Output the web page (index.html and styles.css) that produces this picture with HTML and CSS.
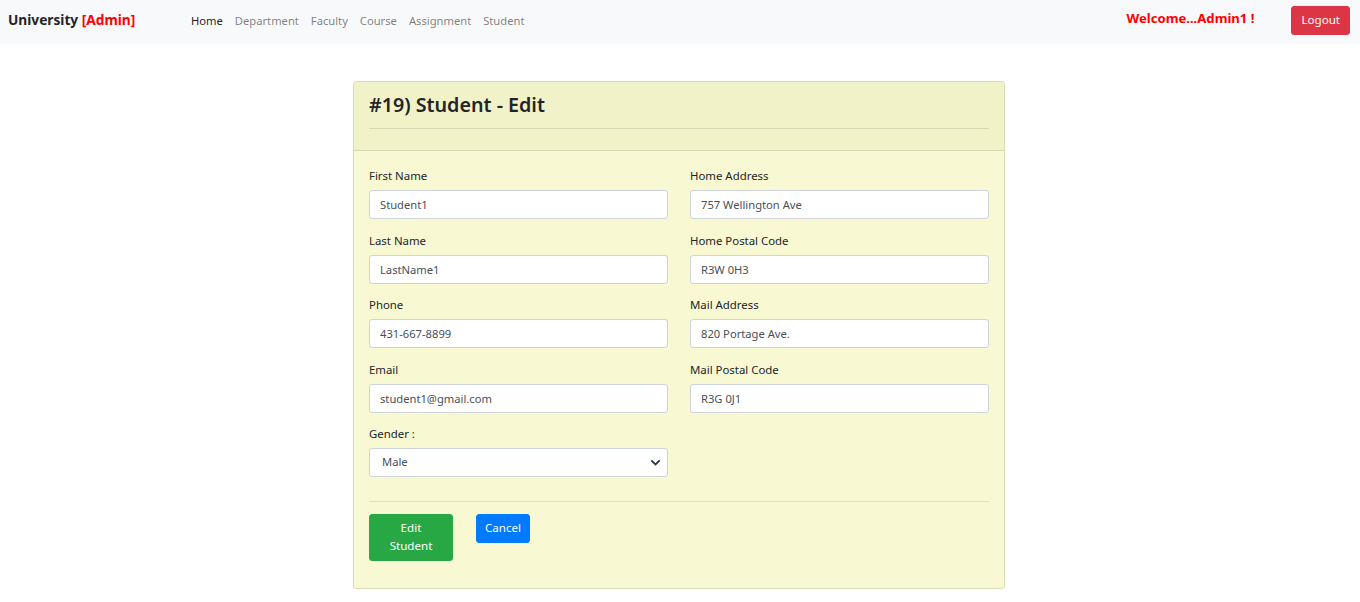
FILE: index.html
```html
<!DOCTYPE html>
<html>
<head>
<meta charset="utf-8">
<link rel="stylesheet" href="styles.css">
</head>
<body>
<nav class="navbar">
  <div class="brand">University <span class="admin">[Admin]</span></div>
  <ul class="nav">
    <li><a class="active" href="#">Home</a></li>
    <li><a href="#">Department</a></li>
    <li><a href="#">Faculty</a></li>
    <li><a href="#">Course</a></li>
    <li><a href="#">Assignment</a></li>
    <li><a href="#">Student</a></li>
  </ul>
  <div class="welcome">Welcome...Admin1 !</div>
  <button class="btn btn-logout">Logout</button>
</nav>

<main class="page">
  <div class="card">
    <div class="card-header">
      <h3>#19) Student - Edit</h3>
      <hr class="hdr-line">
    </div>
    <div class="card-body">
      <div class="grid">
        <div class="col">
          <div class="group"><label>First Name</label><input class="ctrl" value="Student1"></div>
          <div class="group"><label>Last Name</label><input class="ctrl" value="LastName1"></div>
          <div class="group"><label>Phone</label><input class="ctrl" value="431-667-8899"></div>
          <div class="group"><label>Email</label><input class="ctrl" value="student1@gmail.com"></div>
          <div class="group"><label>Gender :</label>
            <div class="select">
              <span>Male</span>
              <svg width="11" height="7" viewBox="0 0 11 7"><path d="M1.3 1.4 L5.5 5.4 L9.7 1.4" fill="none" stroke="#343a40" stroke-width="1.9"/></svg>
            </div>
          </div>
        </div>
        <div class="col">
          <div class="group"><label>Home Address</label><input class="ctrl" value="757 Wellington Ave"></div>
          <div class="group"><label>Home Postal Code</label><input class="ctrl" value="R3W 0H3"></div>
          <div class="group"><label>Mail Address</label><input class="ctrl" value="820 Portage Ave."></div>
          <div class="group"><label>Mail Postal Code</label><input class="ctrl" value="R3G 0J1"></div>
        </div>
      </div>
      <hr class="body-line">
      <div class="actions">
        <button class="btn btn-success">Edit Student</button>
        <button class="btn btn-primary">Cancel</button>
      </div>
    </div>
  </div>
</main>
</body>
</html>
```
FILE: styles.css
```css
* { box-sizing: border-box; }
body {
  margin: 0;
  font-family: "Noto Sans", "Open Sans", sans-serif;
  font-size: 11.4px;
  line-height: 1.5;
  color: #212529;
  background: #fff;
}
.navbar {
  height: 44px;
  background: #f8f9fa;
  display: flex;
  align-items: center;
  padding: 0 10px 0 8px;
}
.brand {
  font-size: 13.7px;
  font-weight: 700;
  color: #212529;
  width: 177px;
  white-space: nowrap;
  margin-top: -4px;
}
.admin { color: #ff0000; }
.nav {
  list-style: none;
  margin: 0;
  padding: 0;
  display: flex;
  flex: 1;
}
.nav a {
  display: block;
  padding: 5px 6px 7px;
  color: rgba(0,0,0,.5);
  text-decoration: none;
  font-size: 11.2px;
}
.nav a.active { color: rgba(0,0,0,.9); }
.welcome {
  color: #ff0000;
  font-weight: 700;
  font-size: 13.1px;
  margin-right: 37px;
  margin-top: -6px;
}
.btn {
  font-family: inherit;
  font-size: 11.6px;
  line-height: 1.4;
  border: 1px solid transparent;
  border-radius: 3px;
  color: #fff;
  cursor: pointer;
}
.btn-logout {
  background: #dc3545;
  border-color: #dc3545;
  padding: 5px 9px;
  height: 29px;
  margin-top: -3px;
}
.page {
  display: flex;
  justify-content: center;
  padding-top: 37px;
}
.card {
  width: 652px;
  margin-left: -2px;
  border: 1px solid #dcdcb6;
  border-radius: 3px;
  background: #f8f8d2;
}
.card-header {
  background: #f2f2c9;
  border-bottom: 1px solid #d9d9b5;
  padding: 10px 15px 21px;
}
.card-header h3 {
  margin: 0;
  font-size: 19.7px;
  font-weight: 600;
  line-height: 25px;
}
.hdr-line {
  margin: 11px 0 0;
  border: 0;
  border-top: 1px solid #d7d7b4;
}
.card-body { padding: 16px 15px 27px; }
.grid {
  display: grid;
  grid-template-columns: 299px 299px;
  column-gap: 22px;
}
.group { margin-bottom: 12.5px; }
.group label {
  display: block;
  margin-bottom: 5px;
  line-height: 18px;
}
.ctrl, .select {
  display: block;
  width: 100%;
  height: 29px;
  border: 1px solid #ced4da;
  border-radius: 3px;
  background: #fff;
  color: #495057;
  font-family: inherit;
  font-size: 11.2px;
  padding: 0 10px;
}
.select {
  display: flex;
  align-items: center;
  justify-content: space-between;
  padding: 0 6px 0 12px;
}
.body-line {
  margin: 11px 0 12px;
  border: 0;
  border-top: 1px solid #dfdfbd;
}
.actions {
  display: flex;
  align-items: flex-start;
  gap: 23px;
}
.btn-success {
  background: #28a745;
  border-color: #28a745;
  width: 84px;
  height: 47px;
  padding: 4px 10px;
  line-height: 18px;
}
.btn-primary {
  background: #007bff;
  border-color: #007bff;
  height: 29px;
  padding: 4px 8px;
}
```
